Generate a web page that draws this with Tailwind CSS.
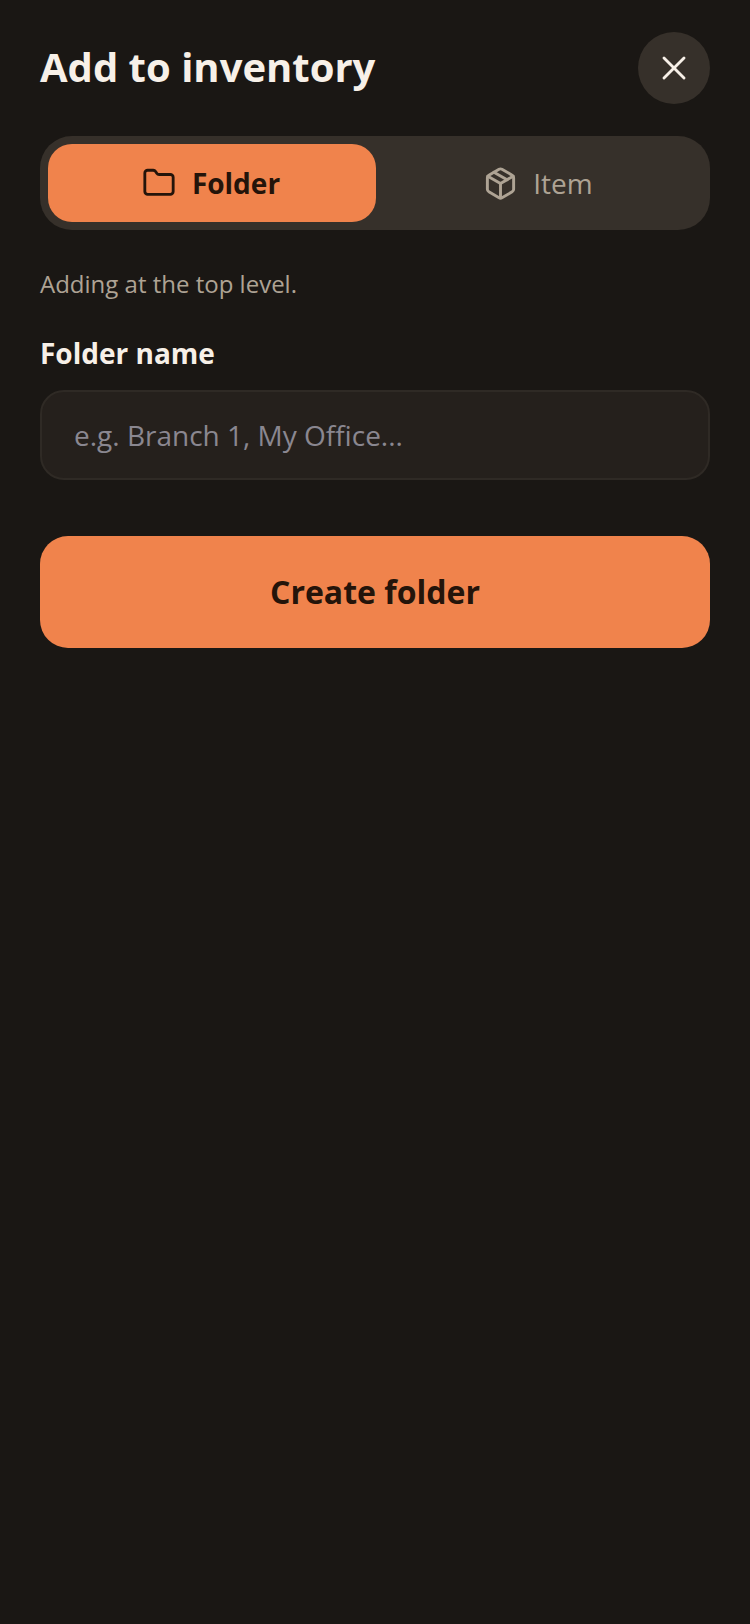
<!DOCTYPE html>
<html>
<head>
<meta charset="utf-8">
<script src="https://cdn.jsdelivr.net/npm/@tailwindcss/browser@4"></script>
</head>
<body class="m-0 bg-[#1a1714]">
<div class="w-[750px] h-[1624px] bg-[#1a1714] px-10 pt-8 font-['Open_Sans',sans-serif]">
  <div class="flex items-center justify-between h-[72px]">
    <h1 class="text-[40px] leading-[48px] font-bold text-[#f7f0e8] -mt-0.5">Add to inventory</h1>
    <button class="w-[72px] h-[72px] rounded-full bg-[#36302a] flex items-center justify-center">
      <svg width="40" height="40" viewBox="0 0 24 24" fill="none" stroke="#f7f0e8" stroke-width="1.75" stroke-linecap="round" stroke-linejoin="round"><path d="M18 6 6 18"/><path d="m6 6 12 12"/></svg>
    </button>
  </div>
  <div class="mt-8 h-[94px] rounded-[32px] bg-[#36302a] p-2 flex">
    <div class="w-[328px] rounded-[24px] bg-[#f0834c] pr-0.5 flex items-center justify-center gap-4 text-[#24140a]">
      <svg width="34" height="34" viewBox="0 0 24 24" fill="none" stroke="currentColor" stroke-width="2" stroke-linecap="round" stroke-linejoin="round"><path d="M20 20a2 2 0 0 0 2-2V8a2 2 0 0 0-2-2h-7.9a2 2 0 0 1-1.69-.9L9.6 3.9A2 2 0 0 0 7.93 3H4a2 2 0 0 0-2 2v13a2 2 0 0 0 2 2Z"/></svg>
      <span class="text-[28px] leading-[40px] font-bold">Folder</span>
    </div>
    <div class="flex-1 rounded-[24px] pr-0.5 flex items-center justify-center gap-[15px] text-[#aea394]">
      <svg width="35" height="35" viewBox="0 0 24 24" fill="none" stroke="currentColor" stroke-width="2" stroke-linecap="round" stroke-linejoin="round"><path d="M11 21.73a2 2 0 0 0 2 0l7-4A2 2 0 0 0 21 16V8a2 2 0 0 0-1-1.73l-7-4a2 2 0 0 0-2 0l-7 4A2 2 0 0 0 3 8v8a2 2 0 0 0 1 1.73z"/><path d="M12 22V12"/><path d="m3.3 7 8.7 5 8.7-5"/><path d="m7.5 4.27 9 5.15"/></svg>
      <span class="text-[28px] leading-[40px]">Item</span>
    </div>
  </div>
  <p class="mt-9 text-[24px] leading-[36px] text-[#aea394]">Adding at the top level.</p>
  <label class="block mt-8 text-[28px] leading-[40px] font-bold text-[#f7f0e8] -translate-y-px">Folder name</label>
  <div class="mt-4 h-[90px] rounded-[24px] border-2 border-[#2f2a25] bg-[#25201c] px-8 flex items-center text-[28px] text-[#8a8790]">e.g. Branch 1, My Office...</div>
  <button class="mt-14 w-full h-[112px] rounded-[28px] bg-[#f0834c] text-[32px] font-bold text-[#24140a]">Create folder</button>
</div>
</body>
</html>
